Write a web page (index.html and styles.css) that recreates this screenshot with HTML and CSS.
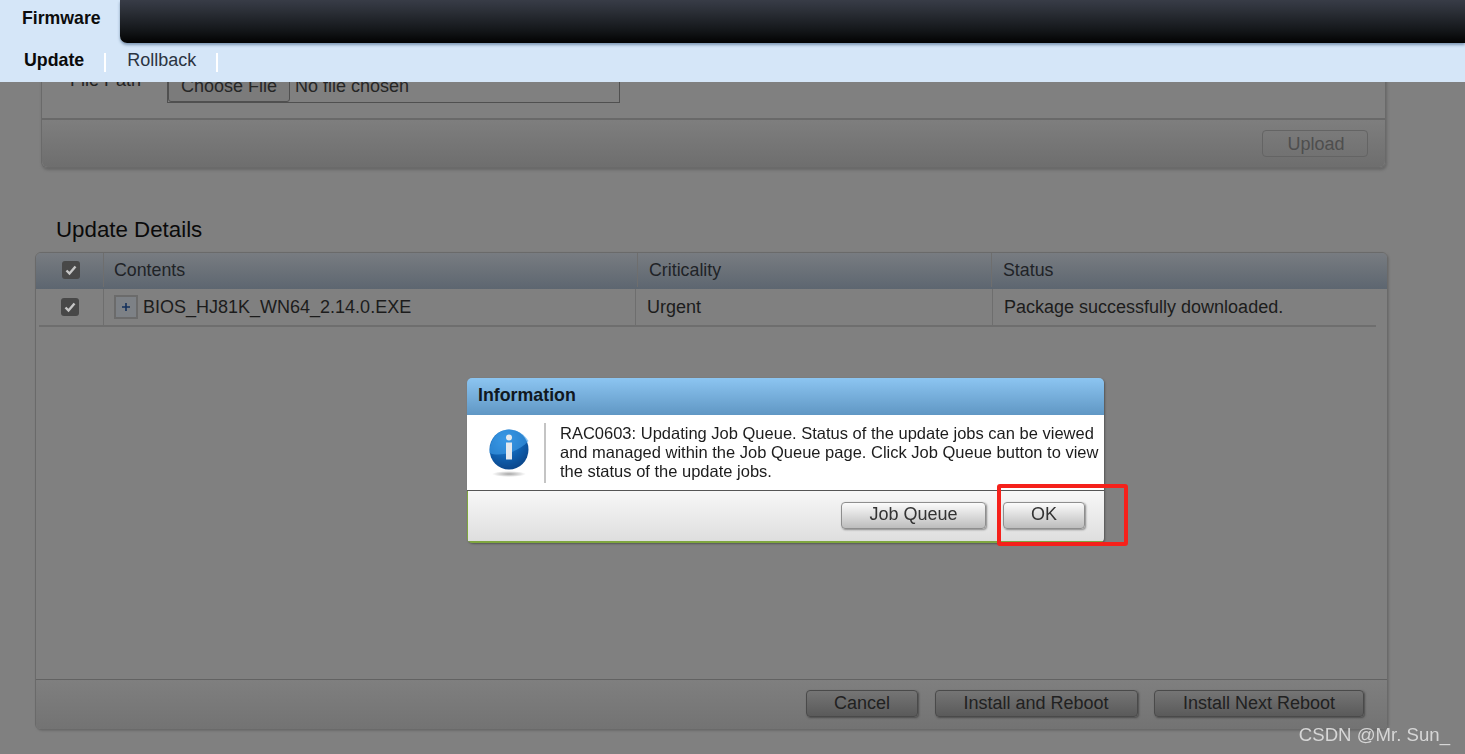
FILE: index.html
```html
<!DOCTYPE html>
<html lang="en">
<head>
<meta charset="utf-8">
<title>Firmware</title>
<link rel="stylesheet" href="styles.css">
</head>
<body>
<header class="topbar">
  <div class="topbar-main">
    <div class="tab-active">Firmware</div>
    <div class="topbar-dark"></div>
  </div>
  <nav class="subnav">
    <a class="subnav-item subnav-current">Update</a>
    <span class="subnav-sep"></span>
    <a class="subnav-item">Rollback</a>
    <span class="subnav-sep"></span>
  </nav>
</header>

<main class="page">
  <section class="upload-panel">
    <div class="upload-body">
      <span class="file-label">File Path</span>
      <div class="file-box">
        <span class="file-btn">Choose File</span>
        <span class="file-none">No file chosen</span>
      </div>
    </div>
    <div class="upload-foot">
      <span class="btn-disabled">Upload</span>
    </div>
  </section>

  <h2 class="section-title">Update Details</h2>

  <section class="details-panel">
    <div class="details-head">
      <div class="cell cell-check head-check"><span class="check"><svg viewBox="0 0 18 18" class="check-mark"><path d="M4.500 9.500l3 3 6-7" fill="none" stroke="#c6c6c6" stroke-width="2.400"/></svg></span></div>
      <div class="cell cell-contents">Contents</div>
      <div class="cell cell-crit">Criticality</div>
      <div class="cell cell-status">Status</div>
    </div>
    <div class="details-row">
      <div class="cell cell-check row-check"><span class="check"><svg viewBox="0 0 18 18" class="check-mark"><path d="M4.500 9.500l3 3 6-7" fill="none" stroke="#c6c6c6" stroke-width="2.400"/></svg></span></div>
      <div class="cell cell-contents row-contents"><span class="expand"><svg viewBox="0 0 10 10" class="expand-plus"><path d="M5 1v8M1 5h8" stroke="#13305c" stroke-width="1.600"/></svg></span>BIOS_HJ81K_WN64_2.14.0.EXE</div>
      <div class="cell cell-crit row-crit">Urgent</div>
      <div class="cell cell-status row-status">Package successfully downloaded.</div>
    </div>
    <div class="details-space"></div>
    <div class="details-foot">
      <span class="btn-dim btn-cancel">Cancel</span>
      <span class="btn-dim btn-install">Install and Reboot</span>
      <span class="btn-dim btn-next">Install Next Reboot</span>
    </div>
  </section>
</main>

<div class="dialog">
  <div class="dialog-title">Information</div>
  <div class="dialog-body">
    <div class="dialog-icon">
      <svg viewBox="0 0 44 50" width="44" height="50">
        <defs>
          <radialGradient id="orb" cx="40%" cy="25%" r="85%">
            <stop offset="0" stop-color="#2f8fe0"/>
            <stop offset=".55" stop-color="#0f5fae"/>
            <stop offset="1" stop-color="#0a3f80"/>
          </radialGradient>
          <radialGradient id="shade" cx="50%" cy="50%" r="50%">
            <stop offset="0" stop-color="#a6a6a6"/>
            <stop offset="1" stop-color="#fff"/>
          </radialGradient>
        </defs>
        <ellipse cx="22" cy="45" rx="17" ry="3" fill="url(#shade)"/>
        <ellipse cx="22" cy="20.500" rx="19.500" ry="20" fill="url(#orb)"/>
        <path d="M2.500 24C12 28 30 24 41.500 12C37 5 30 .5 22 .5C11 .5 2 11 2.500 24z" fill="#3f9eea" opacity=".6"/>
        <circle cx="22" cy="8.500" r="3" fill="#e4e9ee"/>
        <path d="M19 13.500h6v17h-6z" fill="#e4e9ee"/>
      </svg>
    </div>
    <p class="dialog-text">RAC0603: Updating Job Queue. Status of the update jobs can be viewed and managed within the Job Queue page. Click Job Queue button to view the status of the update jobs.</p>
  </div>
  <div class="dialog-foot">
    <span class="btn-light btn-jobq">Job Queue</span>
    <span class="btn-light btn-ok">OK</span>
  </div>
</div>

<div class="red-mark"></div>
<div class="watermark">CSDN @Mr. Sun_</div>
</body>
</html>
```
FILE: styles.css
```css
* { box-sizing: border-box; }
html, body { margin: 0; height: 100%; }
body {
  height: 754px;
  overflow: hidden;
  background: #808080;
  font-family: "Liberation Sans", Arial, sans-serif;
  color: #1c1c1c;
}

/* Fixed header, over the scrolled page */
.topbar {
  position: fixed;
  top: 0; left: 0; right: 0;
  height: 82px;
  background: #d5e6f8;
  z-index: 2;
}
.topbar-main { display: flex; height: 43px; }
.tab-active {
  width: 120px;
  padding: 8px 0 0 22px;
  font-size: 17.700px;
  font-weight: 700;
  color: #0c0c0c;
}
.topbar-dark {
  flex: 1;
  background: linear-gradient(#383c47 0%, #2c3038 25%, #14171a 70%, #020202 100%);
  border-bottom-left-radius: 7px;
  box-shadow: 0 2px 3px #7e97b4;
}
.subnav { display: flex; align-items: center; height: 39px; padding-bottom: 5px; }
.subnav-item { font-size: 18px; color: #2b3442; }
.subnav-current { margin-left: 24px; font-weight: 700; font-size: 17.800px; color: #0a0a0a; }
.subnav-sep { width: 2px; height: 19px; background: #fff; margin: 5px 21px 0 20px; }

/* Scrolled page under the header */
.page { padding: 60px 77px 0 35px; width: 1465px; }

.upload-panel {
  margin-left: 6px;
  width: 1345px;
  height: 108px;
  border: 1px solid #6a6a6a;
  border-top: 0;
  border-radius: 0 0 6px 6px;
  box-shadow: 1px 2px 3px #666;
  display: flex;
  flex-direction: column;
}
.upload-body { height: 60px; display: flex; padding-left: 28px; border-bottom: 2px solid #696969; }
.file-label { font-size: 18px; margin-top: 10px; width: 97px; color: #222; }
.file-box {
  width: 453px;
  height: 34px;
  margin-top: 9px;
  border: 1px solid #505050;
  display: flex;
  align-items: flex-start;
  padding: 0 1px 1px 0;
  font-size: 18px;
  color: #262626;
}
.file-btn {
  width: 122px;
  height: 31px;
  margin-top: 1px;
  background: #7b7b7b;
  border: 1px solid #505050;
  border-radius: 3px;
  text-align: center;
  line-height: 29px;
  margin-right: 5px;
}
.file-none { line-height: 33px; }
.upload-foot {
  flex: 1;
  display: flex;
  justify-content: flex-end;
  align-items: center;
  padding-right: 17px;
  background: linear-gradient(#7e7e7e, #6e6e6e);
  border-radius: 0 0 6px 6px;
}
.btn-disabled {
  width: 106px;
  height: 27px;
  padding-left: 2px;
  border: 1px solid #646464;
  border-radius: 4px;
  font-size: 18px;
  line-height: 26px;
  text-align: center;
  color: #4e4e4e;
}

.section-title {
  margin: 49px 0 9px 21px;
  font-size: 22.300px;
  line-height: 26px;
  font-weight: 400;
  color: #0a0a0a;
}

.details-panel {
  width: 1353px;
  height: 478px;
  border: 1px solid #6a6a6a;
  border-radius: 6px;
  display: flex;
  flex-direction: column;
  box-shadow: 1px 1px 2px #6c6c6c;
}
.details-head, .details-row {
  display: grid;
  grid-template-columns: 67px 534px 354px 1fr;
  flex: none;
}
.details-head {
  height: 36px;
  padding-bottom: 2px;
  background: linear-gradient(#787c81, #5d6670);
  border-radius: 5px 5px 0 0;
  font-size: 17.800px;
  color: #1f2327;
}
.details-row { height: 38px; font-size: 18px; color: #1c1c1c; border-bottom: 2px solid #6e6e6e; margin: 0 11px 0 3px; grid-template-columns: 64px 532px 357px 1fr; }
.cell { display: flex; align-items: center; }
.cell-check { justify-content: center; }
.head-check { padding-left: 2px; }
.row-check { padding-right: 2px; }
.cell-contents, .cell-crit { border-left: 1px solid #6e6e6e; padding-left: 10px; }
.cell-status { border-left: 1px solid #6e6e6e; padding-left: 11px; }
.cell-crit { padding-left: 11px; }
.row-contents { padding-left: 10px; }
.row-crit { padding-left: 11px; }
.row-status { padding-left: 11px; }
.check {
  width: 18px; height: 18px;
  border-radius: 3px;
  background: #484848;
  display: flex;
}
.check-mark { width: 18px; height: 18px; }
.expand {
  width: 24px; height: 24px;
  margin-right: 5px;
  background: #7d8186;
  border: 2px solid #6b6b6b;
  display: flex;
  align-items: center;
  justify-content: center;
}
.expand-plus { width: 10px; height: 10px; }
.details-space { flex: 1; }
.details-foot {
  height: 50px;
  flex: none;
  display: flex;
  align-items: center;
  justify-content: flex-end;
  padding: 0 23px 3px 0;
  gap: 16.500px;
  background: linear-gradient(#7f7f7f, #737373);
  border-top: 1px solid #626262;
  border-radius: 0 0 5px 5px;
}
.btn-dim {
  height: 27px;
  border: 1px solid #4a4a4a;
  border-radius: 4px;
  background: linear-gradient(#757575, #5a5a5a);
  box-shadow: 1px 1px 2px #4c4c4c;
  font-size: 18px;
  line-height: 24px;
  text-align: center;
  color: #212121;
}
.btn-cancel { width: 112px; }
.btn-install { width: 203px; }
.btn-next { width: 210px; }

/* Modal dialog */
.dialog {
  position: fixed;
  left: 467px; top: 378px;
  width: 637px; height: 165px;
  z-index: 3;
  border-radius: 5px;
  box-shadow: 1px 1px 2px #555;
  display: flex;
  flex-direction: column;
  overflow: hidden;
}
.dialog-title {
  height: 37px;
  flex: none;
  padding-left: 11px;
  background: linear-gradient(#8cc5f1, #6097c4);
  font-size: 17.800px;
  font-weight: 700;
  line-height: 34px;
  color: #101820;
}
.dialog-body {
  height: 76px;
  flex: none;
  display: flex;
  align-items: center;
  background: #fff;
  border-bottom: 1px solid #555;
  padding-left: 20px;
}
.dialog-icon { width: 59px; height: 60px; padding-top: 6px; border-right: 2px solid #c4c4c4; flex: none; margin-right: 14px; }
.dialog-icon svg { display: block; }
.dialog-text {
  margin: 0;
  width: 544px;
  font-size: 16.500px;
  line-height: 19px;
  color: #1c1c1c;
}
.dialog-foot {
  flex: 1;
  display: flex;
  align-items: center;
  justify-content: flex-end;
  padding: 0 19px 1px 0;
  gap: 17px;
  background: linear-gradient(#f7f7f7, #dedede);
  border-left: 1px solid #7fa640;
  border-bottom: 2px solid #7fa640;
}
.btn-light {
  height: 27px;
  border: 1px solid #8e8e8e;
  border-radius: 4px;
  background: linear-gradient(#fbfbfb, #bdbdbd);
  box-shadow: 1px 1px 2px #8a8a8a;
  font-size: 18px;
  line-height: 22px;
  text-align: center;
  color: #333;
}
.btn-jobq { width: 145px; }
.btn-ok { width: 82px; }

/* Annotation drawn over the screenshot */
.red-mark {
  position: fixed;
  left: 997px; top: 484px;
  width: 131px; height: 62px;
  border: 4px solid #f5211b;
  border-radius: 3px;
  z-index: 4;
}
.watermark {
  position: fixed;
  right: 15px; bottom: 8px;
  font-size: 18.600px;
  line-height: 22px;
  color: #d6d6d6;
  z-index: 4;
}
```
